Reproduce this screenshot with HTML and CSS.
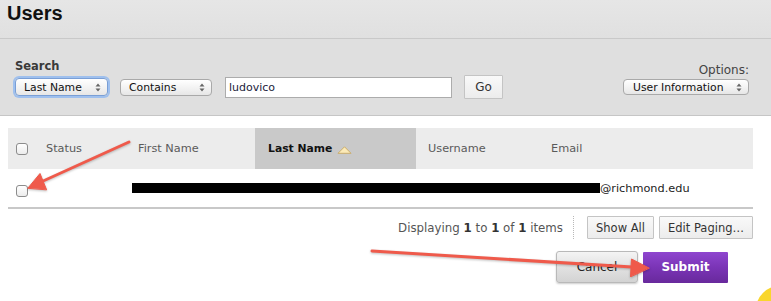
FILE: index.html
```html
<!DOCTYPE html>
<html lang="en">
<head>
    <meta charset="UTF-8">
    <meta name="viewport" content="width=device-width, initial-scale=1.0">
    <title>Users</title>
    <link rel="stylesheet" href="styles.css">
</head>
<body>
    <div class="page">
        <div class="page-title">
            <h1>Users</h1>
        </div>

        <div class="search-panel">
            <div class="search-left">
                <div class="search-label">Search</div>
                <div class="search-controls">
                    <div class="select select-focus select-field">
                        <span>Last Name</span>
                        <svg class="updown" width="6" height="9" viewBox="0 0 6 9"><path d="M3 0.5 L5.5 3.5 H0.5 Z M3 8.5 L5.5 5.5 H0.5 Z" fill="#666"/></svg>
                    </div>
                    <div class="select select-op">
                        <span>Contains</span>
                        <svg class="updown" width="6" height="9" viewBox="0 0 6 9"><path d="M3 0.5 L5.5 3.5 H0.5 Z M3 8.5 L5.5 5.5 H0.5 Z" fill="#666"/></svg>
                    </div>
                    <input type="text" class="search-input" value="ludovico">
                    <button class="btn-small btn-go">Go</button>
                </div>
            </div>
            <div class="search-right">
                <div class="options-label">Options:</div>
                <div class="select select-options">
                    <span>User Information</span>
                    <svg class="updown" width="6" height="9" viewBox="0 0 6 9"><path d="M3 0.5 L5.5 3.5 H0.5 Z M3 8.5 L5.5 5.5 H0.5 Z" fill="#666"/></svg>
                </div>
            </div>
        </div>

        <div class="users-table">
            <div class="row head">
                <div class="cell cb-cell"><span class="checkbox"></span></div>
                <div class="cell">Status</div>
                <div class="cell">First Name</div>
                <div class="cell sorted">
                    Last Name
                    <svg class="sort-arrow" width="15" height="8" viewBox="0 0 15 8"><path d="M7.5 0.8 L14 7.3 H1 Z" fill="#fbeab8" stroke="#c7a863" stroke-width="0.9"/></svg>
                </div>
                <div class="cell">Username</div>
                <div class="cell">Email</div>
            </div>
            <div class="row data">
                <div class="cell cb-cell"><span class="checkbox row-checkbox"></span></div>
                <div class="cell"></div>
                <div class="cell redacted-cell">
                    <span class="redacted"></span><span class="email">@richmond.edu</span>
                </div>
            </div>
        </div>

        <div class="pager">
            <span class="pager-count">Displaying <b>1</b> to <b>1</b> of <b>1</b> items</span>
            <span class="pager-sep"></span>
            <button class="btn-small">Show All</button>
            <button class="btn-small">Edit Paging…</button>
        </div>

        <div class="actions">
            <button class="btn-cancel">Cancel</button>
            <button class="btn-submit">Submit</button>
        </div>

        <!-- annotation layer -->
        <svg class="annotations" width="771" height="301" viewBox="0 0 771 301">
            <g fill="#ef5a4b" stroke="#ef5a4b" stroke-linecap="round">
                <line x1="129" y1="142" x2="42" y2="181.5" stroke-width="3"/>
                <path d="M28 188 L40 173.5 L46.5 189.5 Z" stroke-width="1" stroke-linejoin="round"/>
                <line x1="372" y1="251" x2="632" y2="267" stroke-width="3"/>
                <path d="M649 268 L631.5 259 L630.5 276.5 Z" stroke-width="1" stroke-linejoin="round"/>
            </g>
        </svg>
        <div class="cursor-dot"></div>
    </div>
</body>
</html>
```

FILE: styles.css
```css
* {
    margin: 0;
    padding: 0;
    box-sizing: border-box;
}

body {
    font-family: "DejaVu Sans", "Lucida Grande", sans-serif;
    background: #fff;
    color: #333;
    overflow: hidden;
}

.page {
    position: relative;
    width: 771px;
    height: 301px;
    overflow: hidden;
}

.page-title {
    height: 39px;
    padding: 1px 0 0 7px;
    background: linear-gradient(180deg, #e6e6e6 0%, #e0e0e0 100%);
    border-bottom: 1px solid #c9c9c9;
}

h1 {
    font-family: "Liberation Sans", Arial, sans-serif;
    font-size: 20px;
    line-height: 24px;
    font-weight: bold;
    color: #111;
}

.search-panel {
    height: 77px;
    background: #dfdfdf;
    border-bottom: 1px solid #c6c6c6;
    display: flex;
    justify-content: space-between;
    padding: 20px 22px 0 15px;
}

.search-label {
    font-size: 11.5px;
    font-weight: bold;
    line-height: 15px;
    color: #3a3a3a;
}

.search-controls {
    display: flex;
    align-items: center;
    margin-top: 1px;
}

.select {
    display: flex;
    align-items: center;
    justify-content: space-between;
    height: 18px;
    padding: 0 6px 0 8px;
    font-size: 10.8px;
    color: #111;
    background: linear-gradient(180deg, #ffffff 0%, #f1f1f1 60%, #e6e6e6 100%);
    border: 1px solid #a9a9a9;
    border-radius: 4px;
}

.select-field {
    width: 93px;
}

.select-focus {
    border-color: #7a9fd6;
    box-shadow: 0 0 0 2px #9fc0ee;
}

.select-op {
    width: 92px;
    margin-left: 12px;
    height: 17px;
}

.select-options {
    width: 126px;
    height: 16px;
    padding-left: 9px;
}

.updown {
    flex-shrink: 0;
}

.search-input {
    width: 227px;
    height: 21px;
    margin-left: 13px;
    border: 1px solid #acacac;
    background: #fff;
    padding: 0 3px;
    font-family: inherit;
    font-size: 11px;
    color: #1c1c3a;
    outline: none;
}

.btn-small {
    height: 23px;
    padding: 0 8px;
    font-family: inherit;
    font-size: 11.5px;
    color: #333;
    background: linear-gradient(180deg, #f9f9f9 0%, #ececec 100%);
    border: 1px solid #c4c4c4;
    border-radius: 1px;
}

.btn-go {
    width: 39px;
    height: 24px;
    margin-left: 12px;
    font-size: 12px;
}

.search-right {
    display: flex;
    flex-direction: column;
    align-items: flex-end;
    padding-top: 4px;
}

.options-label {
    font-size: 12px;
    line-height: 15px;
    color: #444;
}

.select-options {
    margin-top: 1px;
}

.users-table {
    margin: 12px 18px 0 8px;
    border-bottom: 2px solid #c8c8c8;
}

.row {
    display: grid;
    grid-template-columns: 38px 92px 117px 161px 135px 1fr;
    align-items: center;
}

.row.head {
    height: 41px;
    background: #ececec;
    font-size: 11.3px;
    color: #5a5a5a;
}

.row.data {
    height: 38px;
    font-size: 11.3px;
    color: #222;
}

.cell {
    height: 100%;
    display: flex;
    align-items: center;
    white-space: nowrap;
}

.cb-cell {
    padding-left: 8px;
}

.sorted {
    background: #c9c9c9;
    padding-left: 13px;
    font-weight: bold;
    color: #111;
    font-size: 10.8px;
}

.sort-arrow {
    margin-left: 5px;
    margin-top: 3px;
}

.row.head .cell:nth-child(5) {
    padding-left: 12px;
}

.checkbox {
    display: inline-block;
    width: 12px;
    height: 12px;
    border: 1px solid #8c8c8c;
    border-radius: 3px;
    background: linear-gradient(180deg, #ffffff 0%, #ececec 100%);
}

.row-checkbox {
    margin-top: 5px;
}

.redacted-cell {
    grid-column: 3 / 7;
    margin-left: -6px;
}

.redacted {
    display: inline-block;
    width: 468px;
    height: 10px;
    background: #000;
}

.pager {
    display: flex;
    justify-content: flex-end;
    align-items: center;
    margin: 7px 18px 0 0;
    gap: 4px;
}

.pager-count {
    font-size: 11.8px;
    color: #555;
}

.pager-count b {
    color: #333;
}

.pager-sep {
    width: 0;
    height: 23px;
    border-left: 1px dotted #b8b8b8;
    margin: 0 9px 0 6px;
}

.pager .btn-small {
    width: 67px;
}

.pager .btn-small:last-child {
    width: 94px;
    margin-left: 1px;
}

.actions {
    display: flex;
    justify-content: flex-end;
    align-items: center;
    gap: 5px;
    margin: 12px 43px 0 0;
}

.btn-cancel {
    width: 82px;
    height: 32px;
    font-family: inherit;
    font-size: 12px;
    color: #222;
    background: linear-gradient(180deg, #f4f4f4 0%, #e2e2e2 50%, #d3d3d3 100%);
    border: 1px solid #b9b9b9;
    border-radius: 3px;
    box-shadow: 0 1px 2px rgba(0, 0, 0, 0.2);
}

.btn-submit {
    width: 85px;
    height: 31px;
    font-family: inherit;
    font-size: 12px;
    font-weight: bold;
    color: #fff;
    background: linear-gradient(180deg, #8f46cf 0%, #7a34b6 50%, #68299c 100%);
    border: none;
    border-radius: 1px;
}

.annotations {
    position: absolute;
    top: 0;
    left: 0;
    pointer-events: none;
    filter: drop-shadow(0 1px 1px rgba(0, 0, 0, 0.25));
}

.cursor-dot {
    position: absolute;
    left: 756px;
    top: 286px;
    width: 47px;
    height: 47px;
    border-radius: 50%;
    background: #f9d62c;
}
```
